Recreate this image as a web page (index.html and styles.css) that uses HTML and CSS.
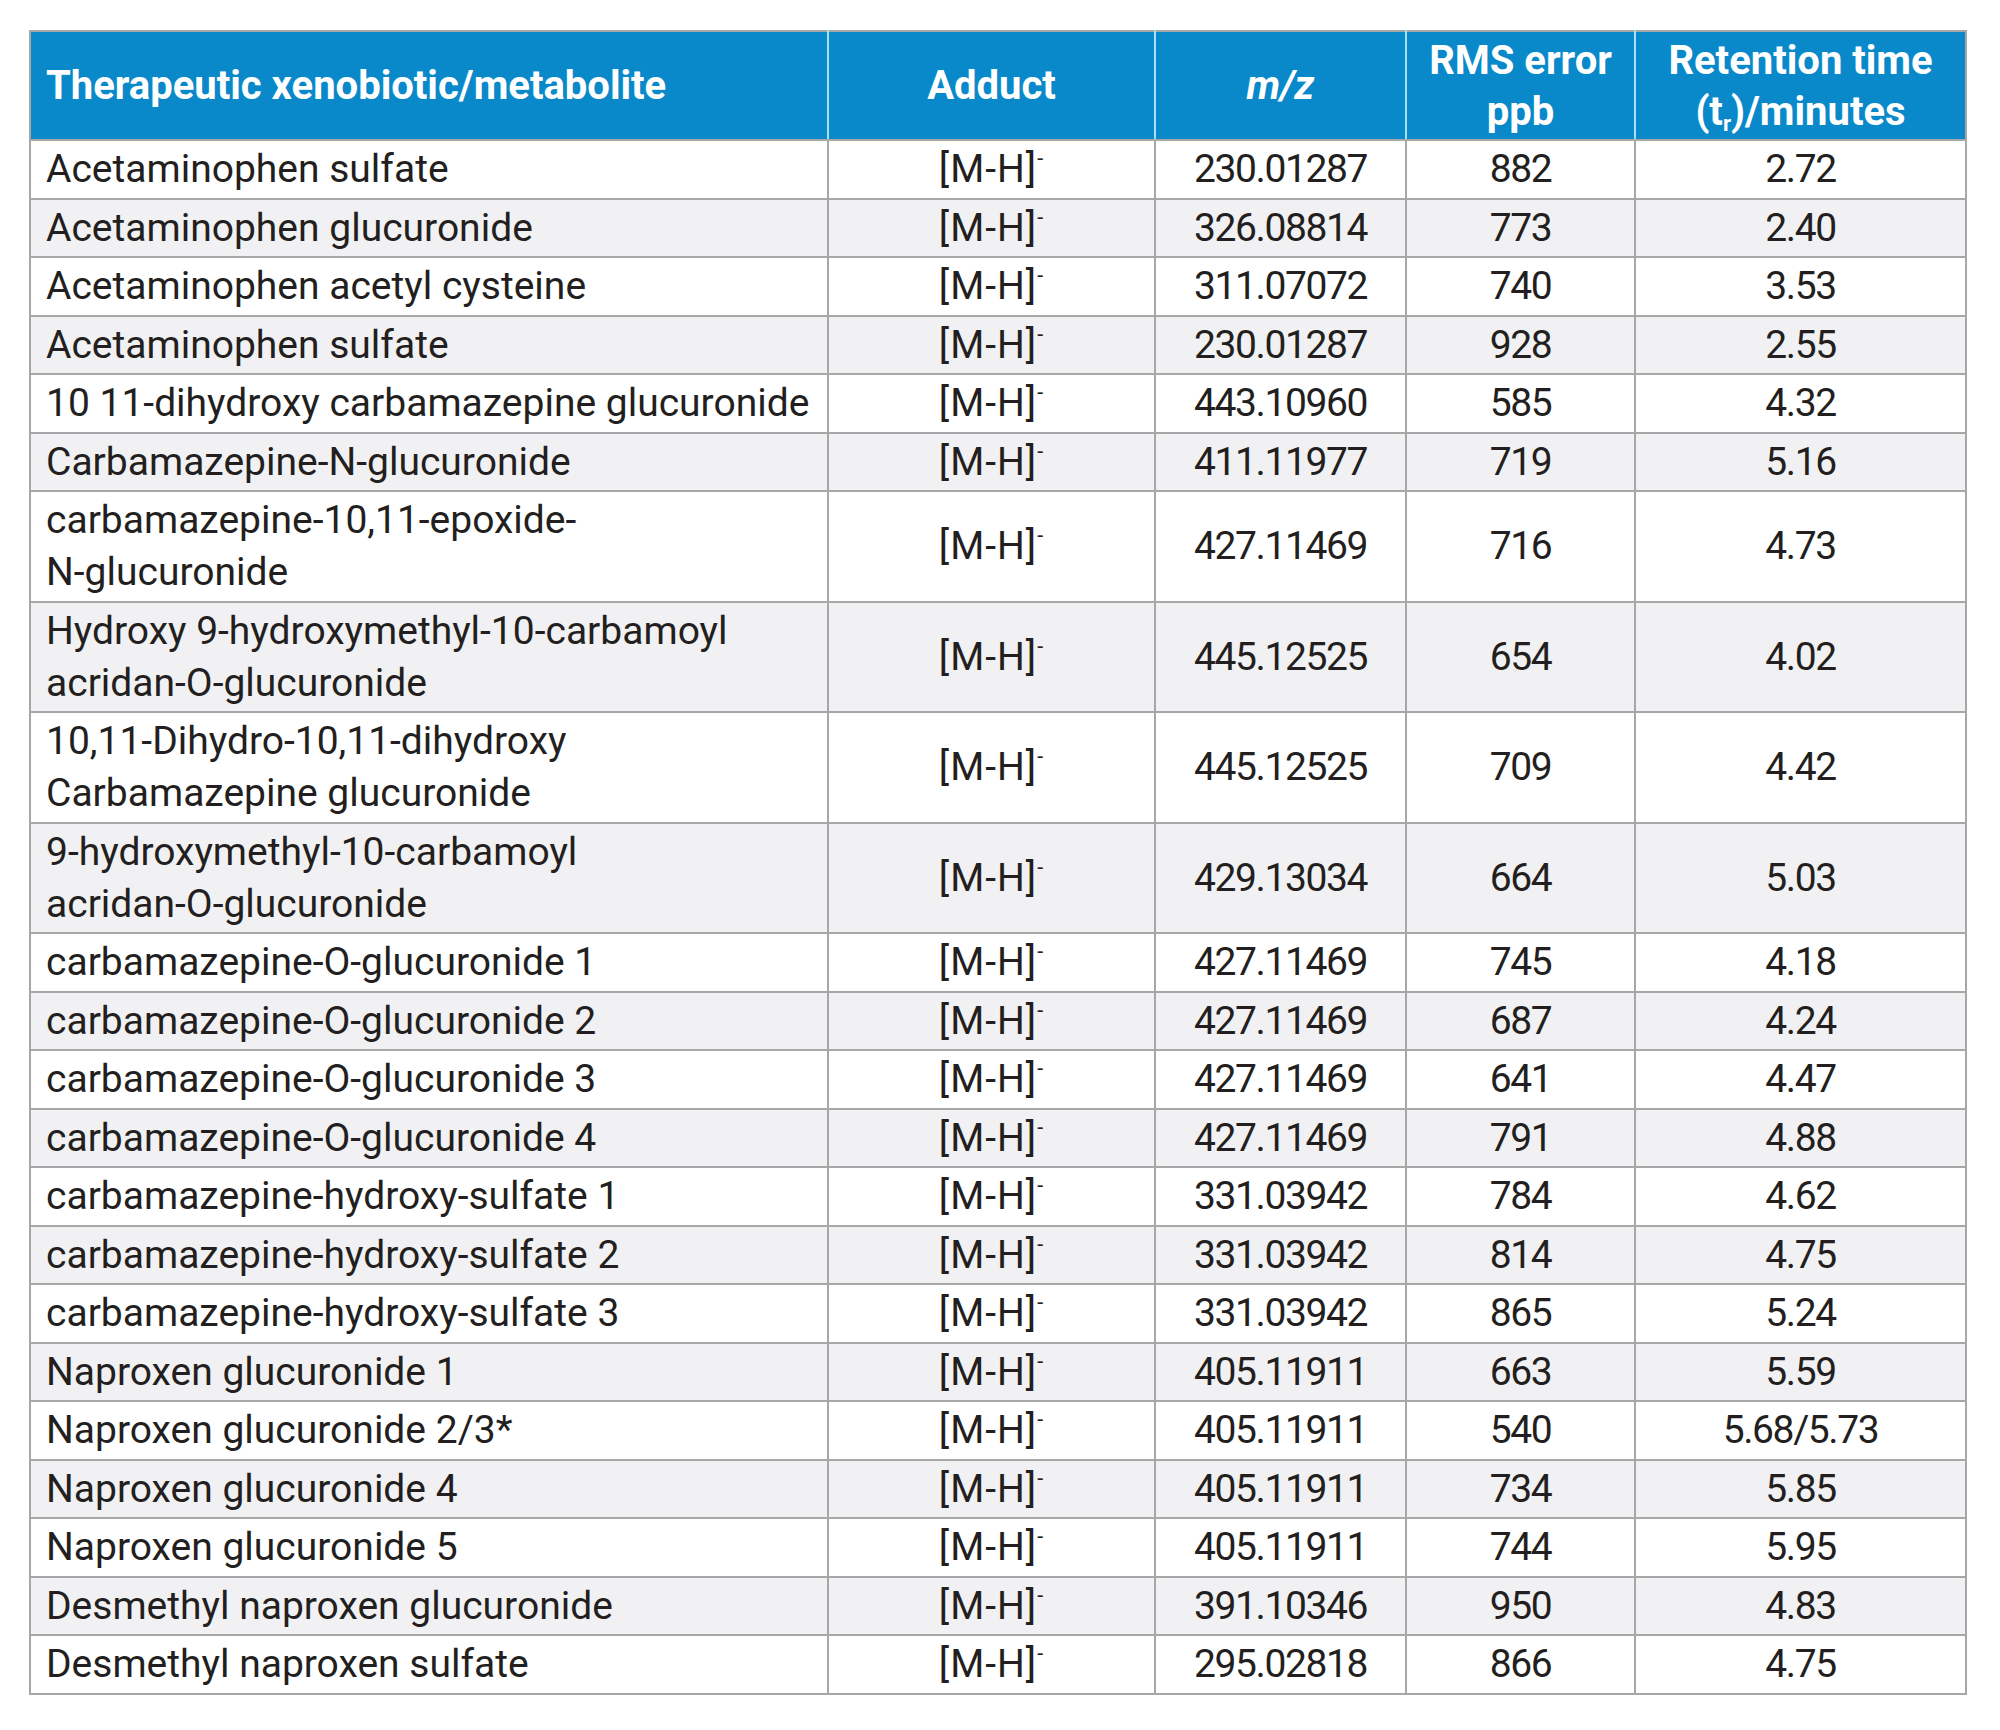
FILE: index.html
```html
<!DOCTYPE html>
<html lang="en">
<head>
<meta charset="utf-8">
<title>Therapeutic xenobiotics and metabolites</title>
<link rel="stylesheet" href="styles.css">
</head>
<body>
<div class="page">
<table class="data">
<colgroup>
<col class="c-name"><col class="c-adduct"><col class="c-mz"><col class="c-rms"><col class="c-rt">
</colgroup>
<thead>
<tr>
<th class="left">Therapeutic xenobiotic/metabolite</th>
<th>Adduct</th>
<th><i>m/z</i></th>
<th>RMS error<br>ppb</th>
<th>Retention time<br>(t<sub>r</sub>)/minutes</th>
</tr>
</thead>
<tbody>
<tr><td class="left">Acetaminophen sulfate</td><td class="add">[M-H]<sup>-</sup></td><td class="num">230.01287</td><td class="num">882</td><td class="num">2.72</td></tr>
<tr><td class="left">Acetaminophen glucuronide</td><td class="add">[M-H]<sup>-</sup></td><td class="num">326.08814</td><td class="num">773</td><td class="num">2.40</td></tr>
<tr><td class="left">Acetaminophen acetyl cysteine</td><td class="add">[M-H]<sup>-</sup></td><td class="num">311.07072</td><td class="num">740</td><td class="num">3.53</td></tr>
<tr><td class="left">Acetaminophen sulfate</td><td class="add">[M-H]<sup>-</sup></td><td class="num">230.01287</td><td class="num">928</td><td class="num">2.55</td></tr>
<tr><td class="left">10 11-dihydroxy carbamazepine glucuronide</td><td class="add">[M-H]<sup>-</sup></td><td class="num">443.10960</td><td class="num">585</td><td class="num">4.32</td></tr>
<tr><td class="left">Carbamazepine-N-glucuronide</td><td class="add">[M-H]<sup>-</sup></td><td class="num">411.11977</td><td class="num">719</td><td class="num">5.16</td></tr>
<tr><td class="left">carbamazepine-10,11-epoxide-<br>N-glucuronide</td><td class="add">[M-H]<sup>-</sup></td><td class="num">427.11469</td><td class="num">716</td><td class="num">4.73</td></tr>
<tr><td class="left">Hydroxy 9-hydroxymethyl-10-carbamoyl<br>acridan-O-glucuronide</td><td class="add">[M-H]<sup>-</sup></td><td class="num">445.12525</td><td class="num">654</td><td class="num">4.02</td></tr>
<tr><td class="left">10,11-Dihydro-10,11-dihydroxy<br>Carbamazepine glucuronide</td><td class="add">[M-H]<sup>-</sup></td><td class="num">445.12525</td><td class="num">709</td><td class="num">4.42</td></tr>
<tr><td class="left">9-hydroxymethyl-10-carbamoyl<br>acridan-O-glucuronide</td><td class="add">[M-H]<sup>-</sup></td><td class="num">429.13034</td><td class="num">664</td><td class="num">5.03</td></tr>
<tr><td class="left">carbamazepine-O-glucuronide 1</td><td class="add">[M-H]<sup>-</sup></td><td class="num">427.11469</td><td class="num">745</td><td class="num">4.18</td></tr>
<tr><td class="left">carbamazepine-O-glucuronide 2</td><td class="add">[M-H]<sup>-</sup></td><td class="num">427.11469</td><td class="num">687</td><td class="num">4.24</td></tr>
<tr><td class="left">carbamazepine-O-glucuronide 3</td><td class="add">[M-H]<sup>-</sup></td><td class="num">427.11469</td><td class="num">641</td><td class="num">4.47</td></tr>
<tr><td class="left">carbamazepine-O-glucuronide 4</td><td class="add">[M-H]<sup>-</sup></td><td class="num">427.11469</td><td class="num">791</td><td class="num">4.88</td></tr>
<tr><td class="left">carbamazepine-hydroxy-sulfate 1</td><td class="add">[M-H]<sup>-</sup></td><td class="num">331.03942</td><td class="num">784</td><td class="num">4.62</td></tr>
<tr><td class="left">carbamazepine-hydroxy-sulfate 2</td><td class="add">[M-H]<sup>-</sup></td><td class="num">331.03942</td><td class="num">814</td><td class="num">4.75</td></tr>
<tr><td class="left">carbamazepine-hydroxy-sulfate 3</td><td class="add">[M-H]<sup>-</sup></td><td class="num">331.03942</td><td class="num">865</td><td class="num">5.24</td></tr>
<tr><td class="left">Naproxen glucuronide 1</td><td class="add">[M-H]<sup>-</sup></td><td class="num">405.11911</td><td class="num">663</td><td class="num">5.59</td></tr>
<tr><td class="left">Naproxen glucuronide 2/3*</td><td class="add">[M-H]<sup>-</sup></td><td class="num">405.11911</td><td class="num">540</td><td class="num">5.68/5.73</td></tr>
<tr><td class="left">Naproxen glucuronide 4</td><td class="add">[M-H]<sup>-</sup></td><td class="num">405.11911</td><td class="num">734</td><td class="num">5.85</td></tr>
<tr><td class="left">Naproxen glucuronide 5</td><td class="add">[M-H]<sup>-</sup></td><td class="num">405.11911</td><td class="num">744</td><td class="num">5.95</td></tr>
<tr><td class="left">Desmethyl naproxen glucuronide</td><td class="add">[M-H]<sup>-</sup></td><td class="num">391.10346</td><td class="num">950</td><td class="num">4.83</td></tr>
<tr><td class="left">Desmethyl naproxen sulfate</td><td class="add">[M-H]<sup>-</sup></td><td class="num">295.02818</td><td class="num">866</td><td class="num">4.75</td></tr>
</tbody>
</table>
</div>
</body>
</html>
```
FILE: styles.css
```css
html, body {
  margin: 0;
  padding: 0;
  background: #ffffff;
}

.page {
  padding: 30px 0 0 29px;
}

.data {
  border-collapse: collapse;
  table-layout: fixed;
  width: 1936px;
  font-family: Roboto, "Liberation Sans", Arial, sans-serif;
  font-size: 39px;
  color: #231f20;
}

.c-name { width: 798px; }
.c-adduct { width: 327px; }
.c-mz { width: 251px; }
.c-rms { width: 229px; }
.c-rt { width: 331px; }

.data th,
.data td {
  border: 2px solid #a7a7a7;
  text-align: center;
  vertical-align: middle;
  padding: 2px 14px 2.5px;
  line-height: 52px;
}

.data th {
  background: #0a89ca;
  color: #ffffff;
  font-weight: 700;
  font-size: 40px;
  line-height: 51px;
  padding-top: 2.5px;
  padding-bottom: 2.5px;
}

.data th:not(:last-child) {
  border-right-color: #a9dff3;
}

.data .left {
  text-align: left;
  padding-left: 15px;
}

.data .num {
  letter-spacing: -1.4px;
}

.data .add {
  letter-spacing: 1px;
}

.data tbody tr:nth-child(even) td {
  background: #f1f1f3;
}

.data sup {
  font-size: 0.55em;
  vertical-align: 0.75em;
  line-height: 0;
}

.data sub {
  font-size: 0.55em;
  vertical-align: -0.25em;
  line-height: 0;
}
```
